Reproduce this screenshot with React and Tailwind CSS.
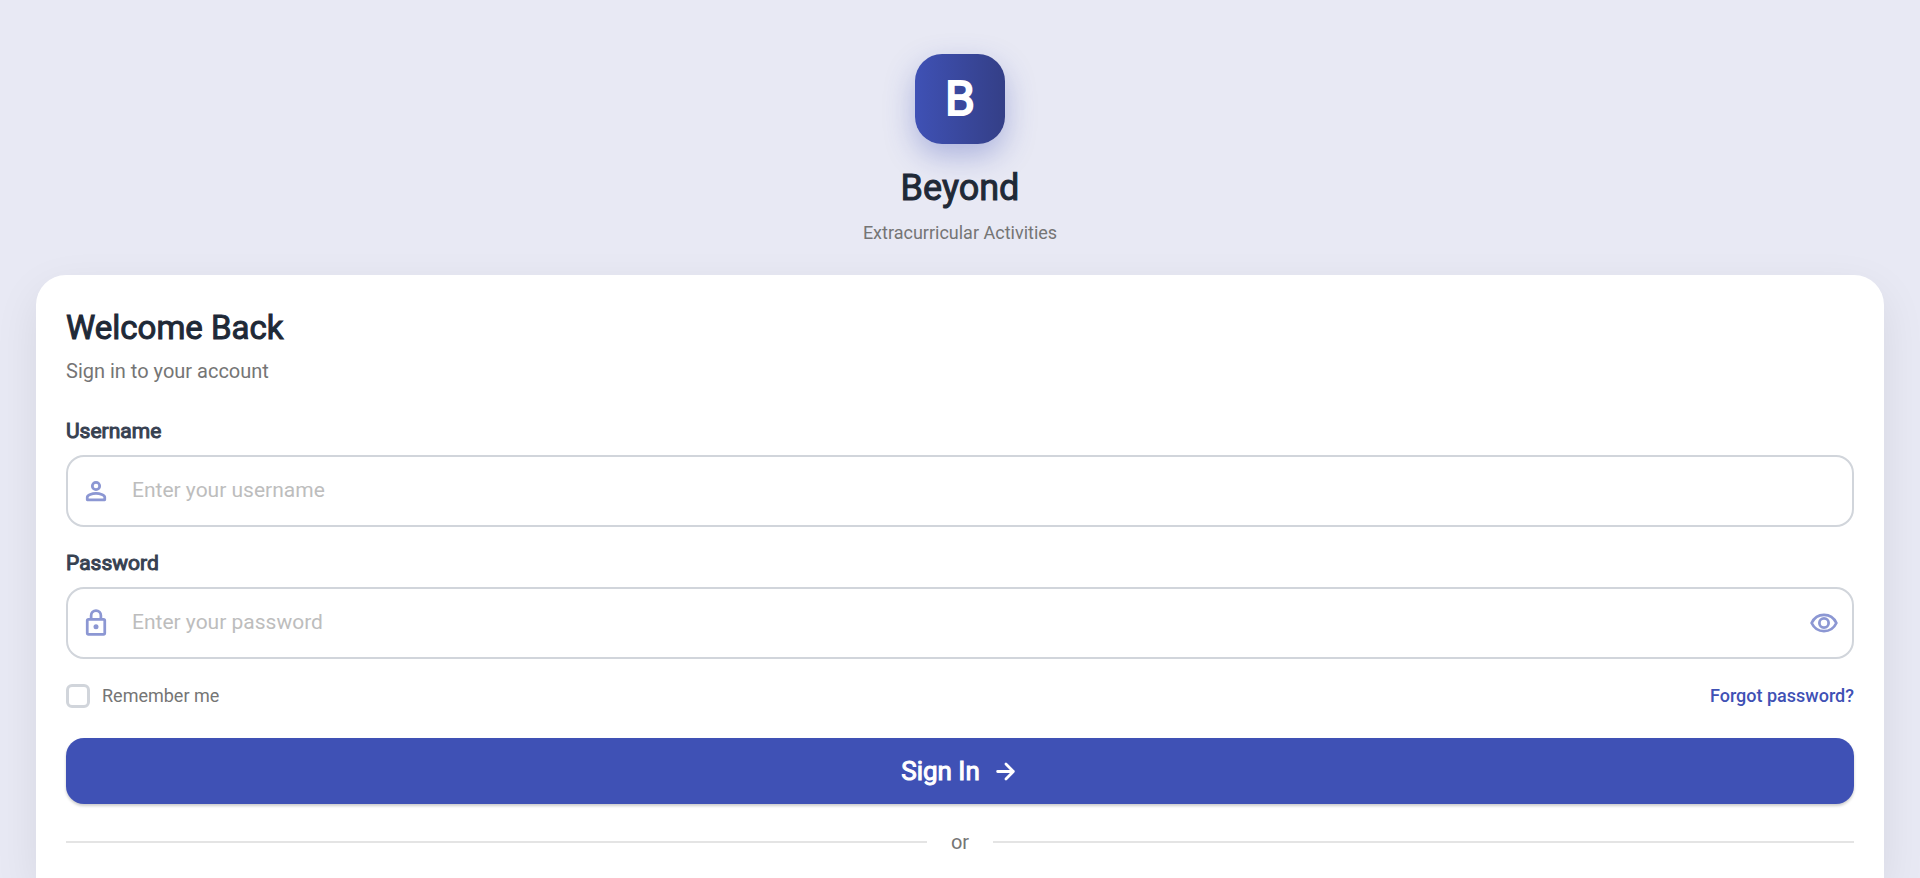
function Icon({ size = "size-[30px]", strokeWidth = 2.2, children }) {
  return (
    <svg viewBox="0 0 24 24" fill="none" stroke="currentColor" strokeWidth={strokeWidth} strokeLinejoin="round" className={`${size} shrink-0`} aria-hidden="true">
      {children}
    </svg>
  );
}

function PersonIcon() {
  return (
    <Icon>
      <circle cx="12" cy="8" r="2.950" />
      <path d="M5 19v-2c0-1.900 4-3.100 7-3.100s7 1.200 7 3.100v2z" />
    </Icon>
  );
}

function LockIcon() {
  return (
    <Icon>
      <rect x="5" y="9" width="14" height="12" rx="1" />
      <path d="M8.100 9V6a3.900 3.900 0 0 1 7.800 0v3" />
      <circle cx="12" cy="15" r="2" fill="currentColor" stroke="none" />
    </Icon>
  );
}

function EyeIcon() {
  return (
    <Icon>
      <path d="M2.100 12C3.900 8.200 7.700 5.500 12 5.500s8.100 2.700 9.900 6.500c-1.800 3.800-5.600 6.500-9.900 6.500S3.900 15.800 2.100 12z" />
      <circle cx="12" cy="12" r="3.700" />
    </Icon>
  );
}

function ArrowIcon() {
  return (
    <Icon size="size-[27px]" strokeWidth={2.5}>
      <path d="M5 12h14M12.400 5.400 19 12l-6.600 6.600" strokeLinecap="round" />
    </Icon>
  );
}

function Field({ id, label, type, placeholder, icon, action }) {
  return (
    <div>
      <label htmlFor={id} className="block text-[21px] leading-8 text-[#374151] [-webkit-text-stroke:1px]">
        {label}
      </label>
      <div className="mt-2 flex h-[72px] items-center rounded-[18px] border-2 border-[#d1d5db] bg-white px-[13px] text-[#8c97d3]">
        {icon}
        <input
          id={id}
          type={type}
          placeholder={placeholder}
          className="ml-[21px] min-w-0 flex-1 bg-transparent text-[21px] text-[#1f2937] outline-none placeholder:text-[#bdbdbd]"
        />
        {action}
      </div>
    </div>
  );
}

export default function App() {
  return (
    <div className="flex min-h-screen flex-col overflow-hidden bg-[#e8e9f4] px-9 pt-[54px] font-[Roboto,sans-serif]">
      <header className="flex flex-col items-center">
        <div className="flex size-[90px] items-center justify-center rounded-[27px] bg-linear-to-r from-[#3f51b5] to-[#343f87] text-[48px] text-white shadow-[0_12px_30px_rgba(63,81,181,0.35)] [-webkit-text-stroke:2px]">
          B
        </div>
        <h1 className="mt-6 text-4xl text-[#1f2937] [-webkit-text-stroke:1px]">Beyond</h1>
        <p className="mt-[11px] text-lg leading-[27px] text-[#757575]">Extracurricular Activities</p>
      </header>

      <main className="mt-[29px] flex-1 rounded-t-[30px] bg-white px-[30px] pt-[30px] shadow-[0_15px_45px_rgba(0,0,0,0.08)]">
        <h2 className="text-[33px] leading-[46px] text-[#1f2937] [-webkit-text-stroke:1px]">Welcome Back</h2>
        <p className="mt-1.5 text-xl text-[#757575]">Sign in to your account</p>

        <form className="mt-[30px] flex flex-col" onSubmit={(e) => e.preventDefault()}>
          <div className="flex flex-col gap-5">
            <Field
              id="username"
              label="Username"
              type="text"
              placeholder="Enter your username"
              icon={<PersonIcon />}
            />
            <Field
              id="password"
              label="Password"
              type="password"
              placeholder="Enter your password"
              icon={<LockIcon />}
              action={
                <button type="button" aria-label="Show password">
                  <EyeIcon />
                </button>
              }
            />
          </div>

          <div className="mt-[23px] flex items-center justify-between text-lg leading-[27px]">
            <label className="flex items-center gap-3 text-[#757575]">
              <input
                type="checkbox"
                className="size-6 appearance-none rounded-md border-3 border-[#d1d5db] bg-white checked:bg-[#3f51b5]"
              />
              Remember me
            </label>
            <a href="#forgot" className="font-medium text-[#3f51b5]">
              Forgot password?
            </a>
          </div>

          <button
            type="submit"
            className="mt-[29px] flex h-[66px] items-center justify-center gap-3 rounded-[18px] bg-[#3f51b5] text-[26px] text-white shadow-[0_2px_3px_rgba(0,0,0,0.2)]"
          >
            <span className="[-webkit-text-stroke:1px]">Sign In</span>
            <ArrowIcon />
          </button>
        </form>

        <div className="mt-6 flex items-center gap-6 text-xl text-[#757575]">
          <div className="h-0.5 flex-1 bg-[#e4e4e4]" />
          or
          <div className="h-0.5 flex-1 bg-[#e4e4e4]" />
        </div>
      </main>
    </div>
  );
}
